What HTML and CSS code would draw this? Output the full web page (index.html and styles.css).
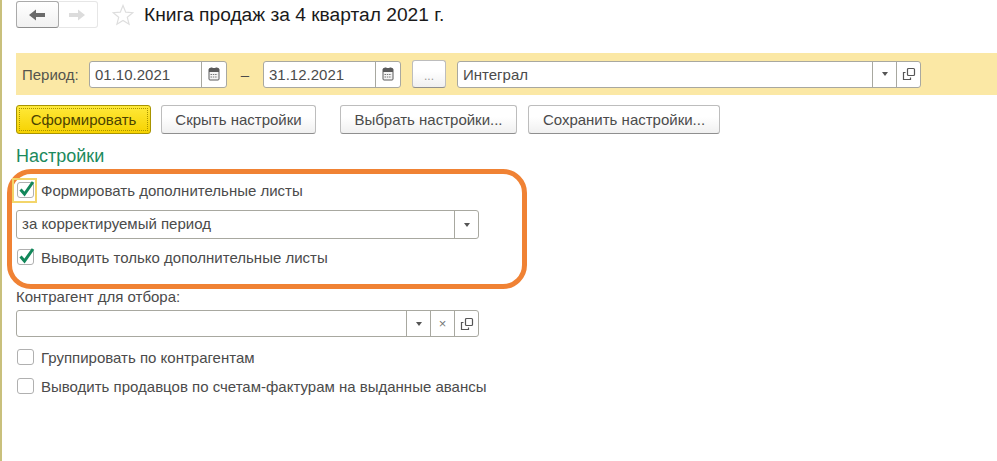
FILE: index.html
```html
<!DOCTYPE html>
<html lang="ru">
<head>
<meta charset="utf-8">
<title>Книга продаж за 4 квартал 2021 г.</title>
<link rel="stylesheet" href="styles.css">
</head>
<body>
<div class="page">
  <header class="head">
    <div class="nav">
      <div class="nav-btn nav-back">
        <svg width="20" height="14" viewBox="0 0 20 14"><path d="M1 7 L8 1.500 V5 H17 V9 H8 V12.500 Z" fill="#6a6a6a"/></svg>
      </div>
      <div class="nav-btn nav-fwd">
        <svg width="20" height="14" viewBox="0 0 20 14"><path d="M17 7 L10 1.500 V5 H1 V9 H10 V12.500 Z" fill="#dcdcdc"/></svg>
      </div>
    </div>
    <svg class="star" width="22" height="22" viewBox="0 0 22 22"><path d="M11 1.500 L13.700 8.200 L20.800 8.700 L15.300 13.300 L17.100 20.300 L11 16.500 L4.900 20.300 L6.700 13.300 L1.200 8.700 L8.300 8.200 Z" fill="#fff" stroke="#dedede" stroke-width="1.200"/></svg>
    <h1 class="title">Книга продаж за 4 квартал 2021 г.</h1>
  </header>

  <section class="band">
    <span class="band-label">Период:</span>
    <div class="field date">
      <span class="value">01.10.2021</span>
      <span class="cell cell-date"><svg width="14" height="14" viewBox="0 0 14 14"><path d="M3.500 .5h2v2h-2zM8.500 .5h2v2h-2z" fill="#555"/><rect x="2" y="1.500" width="10" height="11.500" rx="1" fill="#f4f4f4" stroke="#5a5a5a"/><rect x="2" y="1.500" width="10" height="3.500" fill="#5a5a5a"/><path d="M3.500 7.500h7M3.500 10h7" stroke="#777" stroke-dasharray="1.500 .8"/></svg></span>
    </div>
    <span class="dash">–</span>
    <div class="field date">
      <span class="value">31.12.2021</span>
      <span class="cell cell-date"><svg width="14" height="14" viewBox="0 0 14 14"><path d="M3.500 .5h2v2h-2zM8.500 .5h2v2h-2z" fill="#555"/><rect x="2" y="1.500" width="10" height="11.500" rx="1" fill="#f4f4f4" stroke="#5a5a5a"/><rect x="2" y="1.500" width="10" height="3.500" fill="#5a5a5a"/><path d="M3.500 7.500h7M3.500 10h7" stroke="#777" stroke-dasharray="1.500 .8"/></svg></span>
    </div>
    <div class="btn btn-dots">...</div>
    <div class="field org">
      <span class="value">Интеграл</span>
      <span class="cell"><i class="caret"></i></span>
      <span class="cell"><svg width="14" height="14" viewBox="0 0 14 14"><rect x="5.500" y="1.500" width="7" height="7" rx="1" fill="none" stroke="#555" stroke-width="1.200"/><path d="M3.500 5.500H1.500v7h7v-2" fill="none" stroke="#555" stroke-width="1.200"/></svg></span>
    </div>
  </section>

  <div class="actions">
    <div class="btn btn-primary"><span class="primary-inner">Сформировать</span></div>
    <div class="btn btn-hide">Скрыть настройки</div>
    <div class="btn btn-choose">Выбрать настройки...</div>
    <div class="btn btn-save">Сохранить настройки...</div>
  </div>

  <h2 class="section-title">Настройки</h2>

  <div class="settings">
    <div class="highlight"></div>
    <div class="focus"></div>
    <label class="check check-first">
      <span class="box"><svg width="20" height="20" viewBox="0 0 20 20"><path d="M3.500 10.500 L7.500 15 L16 3" fill="none" stroke="#12875a" stroke-width="3"/></svg></span>
      <span>Формировать дополнительные листы</span>
    </label>
    <div class="field wide kind">
      <span class="value">за корректируемый период</span>
      <span class="cell"><i class="caret"></i></span>
    </div>
    <label class="check check-third">
      <span class="box"><svg width="20" height="20" viewBox="0 0 20 20"><path d="M3.500 10.500 L7.500 15 L16 3" fill="none" stroke="#12875a" stroke-width="3"/></svg></span>
      <span>Выводить только дополнительные листы</span>
    </label>

    <div class="caption">Контрагент для отбора:</div>
    <div class="field wide agent">
      <span class="value"></span>
      <span class="cell"><i class="caret"></i></span>
      <span class="cell cell-x">×</span>
      <span class="cell"><svg width="14" height="14" viewBox="0 0 14 14"><rect x="5.500" y="1.500" width="7" height="7" rx="1" fill="none" stroke="#555" stroke-width="1.200"/><path d="M3.500 5.500H1.500v7h7v-2" fill="none" stroke="#555" stroke-width="1.200"/></svg></span>
    </div>
    <label class="check check-group">
      <span class="box"></span>
      <span>Группировать по контрагентам</span>
    </label>
    <label class="check check-sellers">
      <span class="box"></span>
      <span>Выводить продавцов по счетам-фактурам на выданные авансы</span>
    </label>
  </div>
</div>
</body>
</html>
```
FILE: styles.css
```css
* { box-sizing: border-box; }
html, body { margin: 0; height: 100%; background: #fff; overflow: hidden; }
body { font-family: "Liberation Sans", Arial, sans-serif; font-size: 15px; color: #4b4b4b; }
.page { height: 461px; padding: 1px 0 0 14px; border-left: 2px solid #c9c07c; }

.head { display: flex; align-items: center; height: 27px; }
.nav { display: flex; width: 82px; height: 27px; }
.nav-btn { display: flex; align-items: center; justify-content: center; height: 27px; border-radius: 3px; }
.nav-back { width: 43px; border: 1px solid #aaa; border-bottom-color: #8d8d8d; background: linear-gradient(#fff, #f1f1f1); }
.nav-fwd { width: 39px; border: 1px solid #e6e6e6; border-left: 0; background: #fff; border-radius: 0 3px 3px 0; }
.star { margin-left: 14px; }
.title { margin: 0 0 0 10px; font-size: 19.2px; font-weight: 400; color: #1a1a1a; white-space: nowrap; }

.band { display: flex; align-items: center; height: 42px; margin-top: 25px; padding-left: 6px; background: #fbe8a5; }
.band-label { width: 67px; color: #55554d; }
.field { display: flex; height: 27px; background: #fff; border: 1px solid #a8a8a0; border-radius: 3px; }
.value { flex: 1; min-width: 0; padding-left: 5px; line-height: 25px; white-space: nowrap; }
.cell { width: 24px; border-left: 1px solid #a8a8a0; display: flex; align-items: center; justify-content: center; }
.date { width: 138px; }
.cell-date { width: 25px; }
.dash { width: 36px; text-align: center; }
.btn { display: flex; align-items: center; justify-content: center; border: 1px solid #bdbdbd; border-bottom-color: #8f8f8f; border-radius: 3px; background: linear-gradient(#fff 40%, #f0f0f0); white-space: nowrap; }
.btn-dots { width: 34px; height: 28px; margin: 0 11px; color: #999; font-size: 12px; padding-top: 3px; }
.org { width: 464px; }
.caret { width: 0; height: 0; border: 3px solid transparent; border-top: 4px solid #555; border-bottom: 0; }

.actions { display: flex; height: 29px; margin-top: 10px; }
.btn-primary { width: 135px; border: 1px solid #a89400; background: linear-gradient(#ffe93a, #f6d200); color: #4c4300; padding: 2px; }
.primary-inner { display: flex; align-items: center; justify-content: center; width: 100%; height: 100%; border: 1px dotted #a89400; }
.btn-hide { width: 155px; margin-left: 10px; }
.btn-choose { width: 177px; margin-left: 24px; }
.btn-save { width: 192px; margin-left: 11px; }

.section-title { margin: 12px 0 0; font-size: 18px; font-weight: 400; line-height: 20px; color: #1c8a5d; }

.settings { position: relative; padding-top: 15px; }
.highlight { position: absolute; left: -9px; top: 3px; width: 520px; height: 120px; border: 5px solid #f08234; border-radius: 24px; pointer-events: none; }
.focus { position: absolute; left: -4px; top: 12px; width: 25px; height: 25px; border: 2px solid #f3d56a; }

.check { display: flex; align-items: center; height: 18px; }
.box { position: relative; flex: none; width: 17px; height: 16px; margin: 0 7px 0 1px; border: 1px solid #b0b0b0; border-radius: 3px; background: #fff; }
.box svg { position: absolute; left: -1px; top: -4px; }

.wide { width: 463px; height: 29px; }
.kind { margin-top: 11px; }
.check-third { margin-top: 9px; }
.caption { margin-top: 23px; line-height: 16px; }
.agent { margin-top: 5px; height: 27px; }
.cell-x { color: #777; font-size: 13px; }
.check-group { margin-top: 11px; }
.check-sellers { margin-top: 11px; }
```
